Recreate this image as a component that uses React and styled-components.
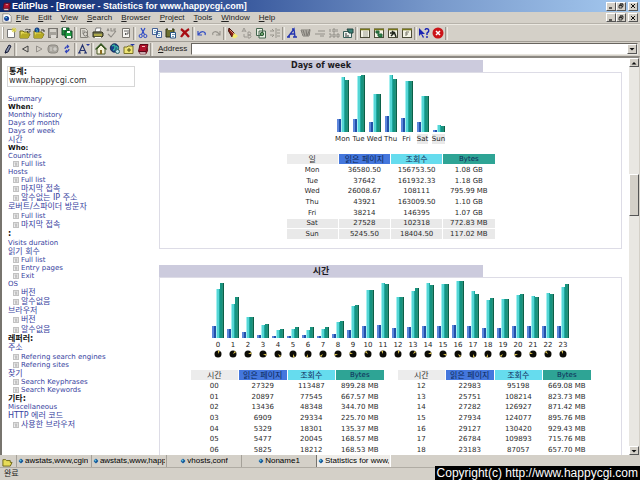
import React from "react";
import styled, { createGlobalStyle } from "styled-components";

const chrome = "#d4d0c8";
const uiFont = '"Liberation Sans", "Noto Sans CJK KR", sans-serif';
const pageFont = '"DejaVu Sans", "Noto Sans CJK KR", sans-serif';

const GlobalStyle = createGlobalStyle`
  * { box-sizing: border-box; }
  body { margin: 0; overflow: hidden; background: ${chrome}; }
  button, input { font: inherit; padding: 0; margin: 0; border: 0; border-radius: 0; }
  svg { display: block; }
`;

const Frame = styled.div`
  height: 100vh;
  display: flex;
  flex-direction: column;
  background: ${chrome};
  font: 8px/10px ${uiFont};
  color: #222;
  overflow: hidden;
`;

const TitleBar = styled.header`
  display: flex;
  align-items: center;
  flex: none;
  height: 12px;
  padding: 0 2px;
  gap: 1px;
  background: linear-gradient(90deg, #0d2a70 0%, #3a5a9e 38%, #7899cb 68%, #a6caf0 100%);
`;

const WindowTitle = styled.h1`
  flex: 1;
  margin: 0;
  font-size: 9px;
  line-height: 12px;
  font-weight: bold;
  color: #fff;
  white-space: nowrap;
`;

const MenuBar = styled.nav`
  display: flex;
  align-items: center;
  flex: none;
  height: 12px;
  padding: 0 2px;
  border-bottom: 1px solid #b7b3ab;
`;

const MenuItems = styled.div`
  flex: 1;
  display: flex;
  gap: 9px;
  padding-left: 4px;
`;

const MenuButton = styled.button`
  background: none;
  line-height: 10px;
  color: #222;
  &::first-letter { text-decoration: underline; }
`;

const WindowButtons = styled.div`
  display: flex;
  & > :last-child { margin-left: 2px; }
`;

const RaisedButton = styled.button`
  display: flex;
  align-items: center;
  justify-content: center;
  flex: none;
  width: 10px;
  height: ${(p) => p.$tall || 9}px;
  background: ${chrome};
  border: 1px solid;
  border-color: #fff #555 #555 #fff;
`;

const Toolbar = styled.div`
  display: flex;
  align-items: center;
  flex: none;
  height: ${(p) => (p.$address ? 14 : 18)}px;
  border-top: ${(p) => (p.$address ? "0" : "1px solid #ece9e2")};
  border-bottom: ${(p) => (p.$address ? "0" : "1px solid #a29e96")};
  padding: 0 2px 0 ${(p) => (p.$address ? 0 : 2)}px;
`;

const ToolButton = styled.button`
  width: 14px;
  height: 14px;
  display: flex;
  align-items: center;
  justify-content: center;
  background: none;
`;

const Divider = styled.span`
  width: 3px;
  height: 13px;
  border-left: 1px solid #9a968e;
  border-right: 1px solid #eceae4;
  flex: none;
  margin-right: ${(p) => p.$after || 0}px;
`;

const Grip = styled.span`
  width: 2px;
  height: 12px;
  border-left: 1px solid #fff;
  border-right: 1px solid #aaa69e;
`;

const AddressLabel = styled.label`
  padding: 0 4px;
  font-size: 8px;
  white-space: nowrap;
  &::first-letter { text-decoration: underline; }
`;

const AddressBox = styled.div`
  flex: 1;
  display: flex;
  height: 12px;
  background: #fff;
  border: 1px solid;
  border-color: #68655f #e8e6e0 #e8e6e0 #68655f;
`;

const AddressInput = styled.input`
  flex: 1;
  min-width: 0;
  background: #fff;
  outline: none;
`;

const Viewport = styled.div`
  flex: 1;
  min-height: 0;
  display: flex;
  background: #fff;
  border: solid;
  border-width: 2px 1px 0 2px;
  border-color: #8b8882 ${chrome} #fff #77746e;
  font-family: ${pageFont};
`;

const Sidebar = styled.aside`
  flex: none;
  width: 157px;
  padding: 8px 0 0 5px;
`;

const SiteCard = styled.div`
  width: 128px;
  height: 21px;
  padding-left: 1px;
  margin-bottom: 8px;
  border: 1px solid #d6d6d6;
  font-size: 8px;
  line-height: 10px;
  color: #333;
`;

const SiteHeading = styled.b`
  display: block;
  line-height: 9px;
  color: #111;
`;

const NavRow = styled.div`
  display: flex;
  align-items: center;
  height: ${(p) => p.$height}px;
  padding-left: ${(p) => (p.$sub ? 6 : 1)}px;
  gap: 2px;
  white-space: nowrap;
  font-size: ${(p) => (p.$height > 8 ? 8 : 7)}px;
  line-height: ${(p) => p.$height}px;
`;

const NavLink = styled.a`
  color: #3742a0;
  text-decoration: none;
`;

const NavHeading = styled.b`
  color: #111;
`;

const Report = styled.main`
  flex: 1;
  min-width: 0;
  display: flex;
  flex-direction: column;
  padding: 2px 7px 0 0;
  gap: 16px;
  overflow: hidden;
`;

const Section = styled.section`
  flex: ${(p) => (p.$fill ? "1 0 auto" : "none")};
  display: flex;
  flex-direction: column;
`;

const SectionTitle = styled.h2`
  width: 70%;
  margin: 0;
  background: #cccbdd;
  color: #1c1a22;
  text-align: center;
  font-size: ${(p) => (p.$large ? 9 : 8)}px;
  line-height: 12px;
  height: 12px;
  font-weight: bold;
`;

const Panel = styled.div`
  flex: 1;
  display: flex;
  flex-direction: column;
  align-items: center;
  border: 1px solid #dddce6;
  padding: 1px 0 8px;
`;

const Chart = styled.div`
  display: flex;
`;

const ChartColumn = styled.div`
  width: ${(p) => p.$width}px;
  display: flex;
  flex-direction: column;
  align-items: center;
`;

const Bars = styled.div`
  display: flex;
  align-items: flex-end;
  height: ${(p) => p.$height}px;
`;

const barFills = {
  pages: "linear-gradient(90deg, #5d86dc 0 50%, #2250a8 50% 100%)",
  hits: "linear-gradient(90deg, #a4f0f0 0 25%, #55d6d6 25% 75%, #20a8a0 75% 100%)",
  bytes: "linear-gradient(90deg, #159480 0 50%, #26907a 50% 75%, #0b6048 75% 100%)",
};

const Bar = styled.span`
  width: 4px;
  background: ${(p) => barFills[p.$kind]};
`;

const BarLabel = styled.span`
  margin-top: 2px;
  height: 10px;
  line-height: 10px;
  font-size: 7px;
  white-space: nowrap;
  color: #222;
  background: ${(p) => (p.$shaded ? "#e9e9e9" : "transparent")};
`;

const Tables = styled.div`
  display: flex;
  gap: 12px;
  margin-top: ${(p) => p.$top}px;
`;

const DataTable = styled.table`
  border-collapse: separate;
  border-spacing: 1px;
  table-layout: fixed;
  width: ${(p) => p.$width}px;
  font-size: 7px;
  line-height: 9px;
  color: #2a2a2a;
  text-align: center;
  tr:nth-child(3n) td { height: 9px; }
`;

const headFills = { label: "#ececec", pages: "#4477dd", hits: "#66dcee", bytes: "#2ea495" };

const HeadCell = styled.th`
  padding: 0;
  height: 10px;
  font-weight: normal;
  font-size: ${(p) => (p.$kind === "bytes" ? 7 : 8)}px;
  white-space: nowrap;
  background: ${(p) => headFills[p.$kind]};
  color: ${(p) => (p.$kind === "label" ? "#333" : "#0c2858")};
`;

const Cell = styled.td`
  padding: 0;
  height: 10px;
  white-space: nowrap;
  background: ${(p) => (p.$shaded ? "#e9e9e9" : "transparent")};
`;

const ScrollTrack = styled.div`
  flex: none;
  width: 10px;
  display: flex;
  flex-direction: column;
  background: #e9e7e2;
`;

const TrackSpace = styled.div`
  flex: ${(p) => p.$share} 1 0;
`;

const TabStrip = styled.div`
  display: flex;
  flex: none;
  height: 13px;
  border-bottom: 1px solid #b0aca4;
`;

const FolderButton = styled.button`
  width: 16px;
  padding-left: 2px;
  background: none;
`;

const Tab = styled.button`
  display: flex;
  align-items: center;
  justify-content: ${(p) => (p.$start ? "flex-start" : "center")};
  gap: 1px;
  width: 75px;
  padding: 0 1px;
  overflow: hidden;
  white-space: nowrap;
  background: ${(p) => (p.$active ? "#eeece8" : chrome)};
  border-left: 1px solid ${(p) => (p.$active ? "#77746e" : "#a5a199")};
  border-right: ${(p) => (p.$active ? "1px solid #fff" : "0")};
`;

const TabText = styled.span`
  overflow: hidden;
`;

const StatusBar = styled.footer`
  flex: none;
  height: 12px;
  padding-left: 4px;
  line-height: 12px;
`;

const Copyright = styled.div`
  position: fixed;
  right: 0;
  bottom: 0;
  height: 14px;
  padding: 0 2px;
  background: #000;
  color: #fff;
  font-size: 12px;
  line-height: 14px;
  white-space: nowrap;
`;

const Icon = ({ size = 12, children }) => (
  <svg width={size} height={size} viewBox="0 0 12 12" fill="none" aria-hidden="true">
    {children}
  </svg>
);

const folder = <path d="M1 4h3l1 1h4v2h2l-2 4H1z" fill="#e8dc58" stroke="#6b6510" strokeWidth="1" />;
const book = (
  <>
    <path d="M3 1.5h8L9 8.5H1.5z" fill="#b0122c" stroke="#5c0818" />
    <path d="M2 9h7v2H3z" fill="#fff" stroke="#5c0818" strokeWidth=".7" />
    <path d="M9 8l2-5v5l-2 3z" fill="#7c1020" />
    <path d="M5 3.5h3" stroke="#f2b8b8" />
  </>
);
const panelWindow = (
  <>
    <rect x="1.5" y="2" width="9" height="8.5" fill="#f4f3e6" stroke="#4b4b38" />
    <path d="M1 2.5h10" stroke="#77761c" strokeWidth="1.6" />
  </>
);

const icons = {
  new: (
    <>
      <path d="M2.5 2.5h5l2 2v6h-7z" fill="#fff" stroke="#777" />
      <path d="M9 .5v5M6.5 3h5M7.2 1.2l3.6 3.6M10.8 1.2L7.2 4.8" stroke="#d9cf3a" />
    </>
  ),
  open: (
    <>
      {folder}
      <path d="M6 3q2-2 4 0l1-1v3H8l1-1" stroke="#333" strokeWidth=".8" />
      <path d="M3 6.5h8L9 11H1z" fill="#b5aa25" />
    </>
  ),
  remote: (
    <>
      {folder}
      <circle cx="4" cy="3" r="2.5" fill="#173f88" />
      <path d="M3 2q2 0 1 3" stroke="#45b9c8" />
      <path d="M3 6.5h8L9 11H1z" fill="#b5aa25" />
      <path d="M8 3h3v2" stroke="#333" />
    </>
  ),
  save: (
    <>
      <rect x="1.5" y="1.5" width="9" height="9" fill="#a5a29b" stroke="#77746f" />
      <path d="M3 2h6v3H3z" fill="#d4d1ca" />
      <path d="M4 8h5v3H4z" fill="#dedbd5" />
    </>
  ),
  saveAll: (
    <>
      <path d="M1 1h7v7H1z" fill="#1d8d3d" stroke="#134c2a" />
      <path d="M4 4h7v7H5L4 10z" fill="#20a043" stroke="#173a24" />
      <path d="M6 4h3v2H6zM6 9h4v2H6zM2 1h3v2H2z" fill="#fff" />
    </>
  ),
  preview: (
    <>
      <path d="M2.5 1.5h5l2 2v7h-7z" fill="#dad7d0" stroke="#85827b" />
      <path d="M4 4h3M4 6h2" stroke="#8b8881" />
      <circle cx="7.5" cy="7" r="2" stroke="#7d7a74" />
      <path d="M9 8.5l2 2" stroke="#7d7a74" />
    </>
  ),
  print: (
    <>
      <path d="M4 1h5l-1 4H3z" fill="#fff" stroke="#555" strokeWidth=".7" />
      <path d="M1 5h9l1 1v3l-1 1H1z" fill="#77784e" stroke="#30311f" />
      <path d="M2 8h8" stroke="#e8dc44" />
      <path d="M3 10h6v1H3z" fill="#fff" />
    </>
  ),
  spell: <path d="M1 4l1-2 1 2M5 1v3h2M10 2H8v2h2M2 7l3 3 5-6" stroke="#8e8b85" strokeWidth="1.1" />,
  wrap: (
    <>
      <path d="M2.5 1.5h7v9h-7z" fill="#f7f6f2" stroke="#77746e" />
      <path d="M4 4h3M8 3v4H5M6 6L5 7l1 1" stroke="#444" strokeWidth=".8" />
    </>
  ),
  cut: (
    <>
      <path d="M4 1l3.5 6.5M8 1L4.500 7.500" stroke="#2b49c6" strokeWidth="1.2" />
      <circle cx="3.7" cy="9" r="1.6" stroke="#2b49c6" />
      <circle cx="8.3" cy="9" r="1.6" stroke="#2b49c6" />
    </>
  ),
  copy: (
    <>
      <path d="M1.5 1.5h5v6h-5zM5.5 4.5h5v6h-5z" fill="#f3f6ff" stroke="#31538b" strokeWidth=".9" />
      <path d="M3 3.5h2M7 6.5h2M7 8.5h2M3 5.5h2" stroke="#3f91a4" strokeWidth=".7" />
    </>
  ),
  paste: (
    <>
      <path d="M1 2h8v8H1z" fill="#6d7030" stroke="#303318" />
      <path d="M3 1h4v2H3z" fill="#ddd" />
      <path d="M5.5 5.5h5v5.5h-5z" fill="#fff" stroke="#285787" />
      <path d="M7 7.5h3M7 9.5h2" stroke="#2c668f" strokeWidth=".7" />
    </>
  ),
  remove: <path d="M2 2q4 3 8 8M10 2Q5 5 2 10" stroke="#a80c12" strokeWidth="2.2" />,
  undo: <path d="M2 4v4h4M2.500 7.500Q5 3.500 8 5q2 1 1 3" stroke="#3550c4" strokeWidth="1.2" />,
  redo: <path d="M10 4v4H6M9.500 7.500Q7 3.500 4 5 2 6 3 8" stroke="#96938c" strokeWidth="1.1" />,
  find: (
    <>
      <path d="M2 1l6 6-3 3-3.500-6z" fill="#8b2418" stroke="#44120b" />
      <path d="M7 6l4 3-3 2.500-3-1z" fill="#f3ec73" />
      <path d="M3 3l4 4" stroke="#df8b6d" />
    </>
  ),
  replace: <path d="M1 5l2-4 2 4M2 4h2M3 7v3h3M7 5v6h2q2-1.500 0-3H7h2q1.500-1.500 0-3z" stroke="#96938c" strokeWidth=".9" />,
  findFiles: (
    <>
      <path d="M1.5 1.5h6v7h-6zM4 4h6.500v7H4z" fill="#e9efe4" stroke="#45664f" />
      <circle cx="7" cy="7" r="1.7" fill="#67a06b" stroke="#2e5935" />
    </>
  ),
  goto: <path d="M7 1v10M1 4h4M1 8h4M8 3h3M8 6h3M8 9h3M5 4l-2-2M5 8l-2 2" stroke="#918e87" strokeWidth=".9" />,
  font: <path d="M2 10L8 2l1 8M4 7h4.500M1 10h3M7 10h4M6 2h2" stroke="#2435b0" strokeWidth="1.4" />,
  hatch: <path d="M1 3h9L9 9H3zM2 5h7M3 7h7M3 3l2 6M6 3l1 6M10 2L7 9" stroke="#77746e" strokeWidth=".9" />,
  wordWrap: <path d="M4 4h7M1 7h10M6 9h4" stroke="#94918a" />,
  numbers: <path d="M2 2v3M5 2h2v3H5zM9 2v3M1 7h2v3H1M5 7h2v3H5zM9 7h2v3H9z" stroke="#8b8881" strokeWidth=".9" />,
  preferences: (
    <>
      <path d="M1.5 4.5h8v6h-8z" fill="#eef2ee" stroke="#365c57" />
      <path d="M5 2h6v4H7z" fill="#3b8178" stroke="#244640" />
      <path d="M3 7h2M3 9h4" stroke="#333" />
    </>
  ),
  window1: (
    <>
      {panelWindow}
      <path d="M4 5h5M4 7h5M4 9h5" stroke="#8e8e83" strokeWidth=".8" />
    </>
  ),
  window2: (
    <>
      {panelWindow}
      <path d="M3 4h3v2H3zM6 7h3v3H6zM5 5v4h2" fill="#298445" stroke="#23653a" />
    </>
  ),
  window3: (
    <>
      {panelWindow}
      <path d="M4 9l4-4M5 4l3 3 1 3M3 6h4" stroke="#20261c" strokeWidth="1.5" />
    </>
  ),
  window4: (
    <>
      {panelWindow}
      <path d="M5 9V5h3M5 7h2" stroke="#77776b" />
    </>
  ),
  help: (
    <>
      <path d="M1 1v8l2-2 2 4 1-1-2-3h3z" fill="#1b25b4" />
      <path d="M7 3q1-2 3-1 2 2-1 4v2M9 9v2" stroke="#1b25b4" strokeWidth="1.4" />
    </>
  ),
  stop: (
    <>
      <circle cx="6" cy="6" r="5.5" fill="#cb1418" />
      <path d="M4 4l4 4M8 4L4 8" stroke="#fff" strokeWidth="1.5" />
    </>
  ),
  pen: <path d="M4 10l1-3 3-5 2 1-3 6zM4 10l2-1" stroke="#181c38" strokeWidth="1" fill="#8893ac" />,
  back: <path d="M9 3v6L3.500 6z" stroke="#333" strokeWidth=".9" />,
  forward: <path d="M3.500 3v6L9 6z" stroke="#8d8a83" strokeWidth=".9" />,
  halt: (
    <>
      <rect x="1" y="2" width="10" height="8" rx="3" fill="#aaa7a0" stroke="#8b8881" />
      <path d="M3 5h2M3 7h2M7 5h2v2H7z" stroke="#e5e3de" strokeWidth=".8" />
    </>
  ),
  refresh: <path d="M4 6q0-2.500 3-2.500M6 2l1.500 1.500L6 5M8 6q0 2.500-3 2.500M6 7L4.500 8.500 6 10" stroke="#3345bb" strokeWidth="1.2" />,
  fontSize: (
    <>
      <path d="M1 10L4.500 2 8 10M2.500 7.500h4M0 10h3M6 10h3" stroke="#26346f" strokeWidth="1.2" />
      <path d="M8 1h4l-2 2z" fill="#25379b" />
    </>
  ),
  home: (
    <>
      <path d="M2 6v5h8V6L6 2z" fill="#f5f2d9" stroke="#4b582b" />
      <path d="M.5 6.500L6 1l5.500 5.500" stroke="#375b24" strokeWidth="1.3" />
      <path d="M5 7h2v4H5z" fill="#8a6e22" />
    </>
  ),
  globe: (
    <>
      <circle cx="5.5" cy="5" r="4.2" fill="#173f8c" stroke="#142b56" />
      <path d="M3 3q3-2 3 1T4 7M7 3l2 2-2 2" stroke="#38b49c" strokeWidth="1.4" />
      <circle cx="8.5" cy="8.5" r="2" fill="#bde2ea" stroke="#27636d" />
    </>
  ),
  favorites: (
    <>
      <path d="M1 4h3l1-1h5v7.500H1z" fill="#eee474" stroke="#78702a" />
      <path d="M6 5v4M4 7h4" stroke="#55520d" />
      <path d="M7 1h5l-2.500 2z" fill="#2435a0" />
    </>
  ),
  book,
  page: (
    <>
      <path d="M1 1h7l3 3v7H1z" fill="#fff" stroke="#85827c" />
      <circle cx="5.5" cy="6.5" r="3" fill="#173f97" />
      <path d="M4 5.500h2" stroke="#66cce2" strokeWidth="1.5" />
    </>
  ),
  folder,
  dot: (
    <>
      <path d="M6 1l5 5-5 5-5-5z" fill="#2a6fae" />
      <circle cx="6" cy="6" r="3.5" fill="#0f4f91" />
      <circle cx="5" cy="5" r="2" fill="#62c4df" />
    </>
  ),
  item: (
    <>
      <rect x="1" y="1" width="10" height="10" fill="#eee" stroke="#c2c2c2" strokeWidth="2" />
      <path d="M3 4h6M6 4v5M4 8h5" stroke="#aaa" strokeWidth="1.5" />
    </>
  ),
  minimize: <path d="M2 10h6" stroke="#111" strokeWidth="2.5" />,
  restore: <path d="M4 4V2h6v5H8M2 5h6v5H2zM4 2h6M2 5.500h6" stroke="#222" strokeWidth="1.7" />,
  close: <path d="M2 2l8 8M10 2l-8 8" stroke="#111" strokeWidth="2" />,
  down: <path d="M1 4h10L6 9z" fill="#111" />,
  up: <path d="M1 9h10L6 4z" fill="#111" />,
};

const Clock = ({ hour }) => {
  const point = (turn) =>
    `${(4 + 3.5 * Math.sin(turn)).toFixed(2)} ${(4 - 3.5 * Math.cos(turn)).toFixed(2)}`;
  const start = ((hour % 12) * Math.PI) / 6;
  return (
    <svg width="8" height="8" viewBox="0 0 8 8" aria-hidden="true">
      <circle cx="4" cy="4" r="3.5" fill="#0c0c06" />
      <path d={`M4 4L${point(start)}A3.500 3.500 0 0 1 ${point(start + Math.PI / 6)}Z`} fill="#e0c650" />
    </svg>
  );
};

const menus = ["File", "Edit", "View", "Search", "Browser", "Project", "Tools", "Window", "Help"];

const toolGroups = [
  ["new", "open", "remote", "save", "saveAll"],
  ["preview", "print", "spell", "wrap"],
  ["cut", "copy", "paste", "remove"],
  ["undo", "redo"],
  ["find", "replace", "findFiles", "goto"],
  ["font", "hatch", "wordWrap", "numbers", "preferences"],
  ["window1", "window2", "window3", "window4"],
  ["help", "stop"],
];

const browserGroups = [
  { tools: ["pen"], after: 1 },
  { tools: ["back", "forward", "halt", "refresh"], after: 0 },
  { tools: ["fontSize"], after: 0 },
  { tools: ["home", "globe", "favorites", "book"], after: 1 },
];

/* kind: h = heading, l = link, s = nested link */
const navigation = [
  ["l", "Summary", 8], ["h", "When:", 8], ["l", "Monthly history", 8], ["l", "Days of month", 8],
  ["l", "Days of week", 8], ["l", "시간", 9], ["h", "Who:", 8], ["l", "Countries", 8],
  ["s", "Full list", 8], ["l", "Hosts", 8], ["s", "Full list", 8], ["s", "마지막 접속", 9],
  ["s", "알수없는 IP 주소", 9], ["l", "로버트/스파이더 방문자", 10], ["s", "Full list", 8],
  ["s", "마지막 접속", 9], ["h", ":", 10], ["l", "Visits duration", 8], ["l", "읽기 회수", 9],
  ["s", "Full list", 8], ["s", "Entry pages", 8], ["s", "Exit", 8], ["l", "OS", 8], ["s", "버전", 9],
  ["s", "알수없음", 9], ["l", "브라우저", 9], ["s", "버전", 10], ["s", "알수없음", 9],
  ["h", "레퍼러:", 9], ["l", "주소", 10], ["s", "Refering search engines", 8],
  ["s", "Refering sites", 8], ["l", "찾기", 9], ["s", "Search Keyphrases", 8],
  ["s", "Search Keywords", 8], ["h", "기타:", 9], ["l", "Miscellaneous", 8],
  ["l", "HTTP 에러 코드", 9], ["s", "사용한 브라우저", 10],
];

const weekBars = [
  ["Mon", 13, 55, 52], ["Tue", 13, 56, 57], ["Wed", 10, 38, 38], ["Thu", 16, 57, 53],
  ["Fri", 14, 51, 51], ["Sat", 10, 36, 36], ["Sun", 2, 7, 6],
];

const hourBars = [
  [12, 49, 55], [9, 34, 41], [6, 21, 21], [3, 13, 14], [2, 8, 9], [2, 9, 11], [3, 8, 11], [2, 9, 11],
  [4, 16, 17], [8, 32, 33], [12, 48, 48], [13, 55, 54], [10, 41, 41], [11, 47, 50], [12, 55, 53],
  [12, 54, 54], [13, 57, 57], [12, 47, 44], [10, 38, 40], [10, 39, 39], [12, 43, 44], [12, 42, 41],
  [12, 45, 44], [12, 51, 54],
];

const weekRows = [
  ["Mon", "36580.50", "156753.50", "1.08 GB"],
  ["Tue", "37642", "161932.33", "1.18 GB"],
  ["Wed", "26008.67", "108111", "795.99 MB"],
  ["Thu", "43921", "163009.50", "1.10 GB"],
  ["Fri", "38214", "146395", "1.07 GB"],
  ["Sat", "27528", "102318", "772.83 MB"],
  ["Sun", "5245.50", "18404.50", "117.02 MB"],
];

const morningRows = [
  ["00", "27329", "113487", "899.28 MB"],
  ["01", "20897", "77545", "667.57 MB"],
  ["02", "13436", "48348", "344.70 MB"],
  ["03", "6909", "29334", "225.70 MB"],
  ["04", "5329", "18301", "135.37 MB"],
  ["05", "5477", "20045", "168.57 MB"],
  ["06", "5825", "18212", "168.53 MB"],
];

const afternoonRows = [
  ["12", "22983", "95198", "669.08 MB"],
  ["13", "25751", "108214", "823.73 MB"],
  ["14", "27282", "126927", "871.42 MB"],
  ["15", "27934", "124077", "895.76 MB"],
  ["16", "29127", "130420", "929.43 MB"],
  ["17", "26784", "109893", "715.76 MB"],
  ["18", "23183", "87057", "657.70 MB"],
];

const tabs = [
  { text: "awstats,www,cgin", start: true },
  { text: "awstats,www,happ", start: true },
  { text: "vhosts,conf" },
  { text: "Noname1" },
  { text: "Statistics for www,", start: true, active: true },
];

const Tool = ({ name }) => (
  <ToolButton type="button" aria-label={name}>
    <Icon>{icons[name]}</Icon>
  </ToolButton>
);

const WindowControls = () => (
  <WindowButtons>
    {["minimize", "restore", "close"].map((name) => (
      <RaisedButton key={name} type="button" aria-label={name}>
        <Icon size={6}>{icons[name]}</Icon>
      </RaisedButton>
    ))}
  </WindowButtons>
);

const BarGroup = ({ values, height }) => (
  <Bars $height={height}>
    {["pages", "hits", "bytes"].map((kind, i) => (
      <Bar key={kind} $kind={kind} style={{ height: values[i] }} />
    ))}
  </Bars>
);

const StatsTable = ({ label, rows, width, shadedFrom = rows.length }) => (
  <DataTable $width={width}>
    <thead>
      <tr>
        <HeadCell $kind="label">{label}</HeadCell>
        <HeadCell $kind="pages">읽은 페이지</HeadCell>
        <HeadCell $kind="hits">조회수</HeadCell>
        <HeadCell $kind="bytes">Bytes</HeadCell>
      </tr>
    </thead>
    <tbody>
      {rows.map((row, r) => (
        <tr key={row[0]}>
          {row.map((value, c) => (
            <Cell key={c} $shaded={r >= shadedFrom}>{value}</Cell>
          ))}
        </tr>
      ))}
    </tbody>
  </DataTable>
);

export default function App() {
  return (
    <Frame>
      <GlobalStyle />
      <TitleBar>
        <Icon size={9}>{book}</Icon>
        <WindowTitle>EditPlus - [Browser - Statistics for www,happycgi,com]</WindowTitle>
        <WindowControls />
      </TitleBar>
      <MenuBar>
        <Icon size={10}>{icons.page}</Icon>
        <MenuItems>
          {menus.map((name) => (
            <MenuButton key={name} type="button">{name}</MenuButton>
          ))}
        </MenuItems>
        <WindowControls />
      </MenuBar>
      <Toolbar>
        <Grip />
        {toolGroups.map((group) => (
          <React.Fragment key={group[0]}>
            {group.map((name) => <Tool key={name} name={name} />)}
            <Divider />
          </React.Fragment>
        ))}
      </Toolbar>
      <Toolbar $address>
        {browserGroups.map(({ tools, after }) => (
          <React.Fragment key={tools[0]}>
            {tools.map((name) => <Tool key={name} name={name} />)}
            <Divider $after={after} />
          </React.Fragment>
        ))}
        <AddressLabel htmlFor="address">Address</AddressLabel>
        <AddressBox>
          <AddressInput id="address" type="text" />
          <RaisedButton type="button" aria-label="Address history" $tall={10}>
            <Icon size={6}>{icons.down}</Icon>
          </RaisedButton>
        </AddressBox>
      </Toolbar>
      <Viewport>
        <Sidebar>
          <SiteCard>
            <SiteHeading>통계:</SiteHeading>
            www.happycgi.com
          </SiteCard>
          {navigation.map(([kind, text, height], i) => (
            <NavRow key={i} $height={height} $sub={kind === "s"}>
              {kind === "s" && <Icon size={6}>{icons.item}</Icon>}
              {kind === "h" ? <NavHeading>{text}</NavHeading> : <NavLink href="#">{text}</NavLink>}
            </NavRow>
          ))}
        </Sidebar>
        <Report>
          <Section>
            <SectionTitle>Days of week</SectionTitle>
            <Panel>
              <Chart>
                {weekBars.map(([day, ...values], i) => (
                  <ChartColumn key={day} $width={16}>
                    <BarGroup values={values} height={58} />
                    <BarLabel $shaded={i > 4}>{day}</BarLabel>
                  </ChartColumn>
                ))}
              </Chart>
              <Tables $top={9}>
                <StatsTable label="일" rows={weekRows} width={210} shadedFrom={5} />
              </Tables>
            </Panel>
          </Section>
          <Section $fill>
            <SectionTitle $large>시간</SectionTitle>
            <Panel>
              <Chart>
                {hourBars.map((values, hour) => (
                  <ChartColumn key={hour} $width={15}>
                    <BarGroup values={values} height={59} />
                    <BarLabel>{hour}</BarLabel>
                    <Clock hour={hour} />
                  </ChartColumn>
                ))}
              </Chart>
              <Tables $top={11}>
                <StatsTable label="시간" rows={morningRows} width={195} />
                <StatsTable label="시간" rows={afternoonRows} width={195} />
              </Tables>
            </Panel>
          </Section>
        </Report>
        <ScrollTrack>
          <RaisedButton type="button" aria-label="Scroll up">
            <Icon size={6}>{icons.up}</Icon>
          </RaisedButton>
          <TrackSpace $share={107} />
          <RaisedButton type="button" aria-label="Scroll position" $tall={42} />
          <TrackSpace $share={230} />
          <RaisedButton type="button" aria-label="Scroll down">
            <Icon size={6}>{icons.down}</Icon>
          </RaisedButton>
        </ScrollTrack>
      </Viewport>
      <TabStrip>
        <FolderButton type="button" aria-label="Directory">
          <Icon size={11}>{folder}</Icon>
        </FolderButton>
        {tabs.map(({ text, start, active }) => (
          <Tab key={text} type="button" $start={start} $active={active}>
            <Icon size={6}>{icons.dot}</Icon>
            <TabText>{text}</TabText>
          </Tab>
        ))}
      </TabStrip>
      <StatusBar>완료</StatusBar>
      <Copyright>Copyright(c) http://www.happycgi.com</Copyright>
    </Frame>
  );
}
